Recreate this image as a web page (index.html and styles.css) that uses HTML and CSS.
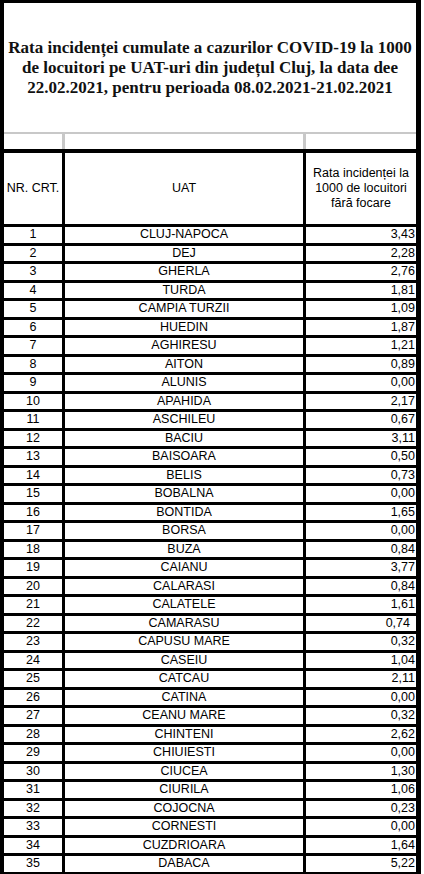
FILE: index.html
```html
<!DOCTYPE html>
<html lang="ro">
<head>
<meta charset="utf-8">
<title>Rata incidenței cumulate COVID-19 Cluj</title>
<link rel="stylesheet" href="styles.css">
</head>
<body>
<div class="sheet">
  <div class="title">
    <p>Rata incidenței cumulate a cazurilor COVID-19 la 1000<br>de locuitori pe UAT-uri din județul Cluj, la data dee<br>22.02.2021, pentru perioada 08.02.2021-21.02.2021</p>
  </div>
  <div class="blank">
    <div></div><div></div><div></div>
  </div>
  <div class="table">
    <div class="th">NR. CRT.</div>
    <div class="th">UAT</div>
    <div class="th">Rata incidenței la<br>1000 de locuitori<br>fără focare</div>

    <div class="c">1</div><div class="c">CLUJ-NAPOCA</div><div class="n">3,43</div>
    <div class="c">2</div><div class="c">DEJ</div><div class="n">2,28</div>
    <div class="c">3</div><div class="c">GHERLA</div><div class="n">2,76</div>
    <div class="c">4</div><div class="c">TURDA</div><div class="n">1,81</div>
    <div class="c">5</div><div class="c">CAMPIA TURZII</div><div class="n">1,09</div>
    <div class="c">6</div><div class="c">HUEDIN</div><div class="n">1,87</div>
    <div class="c">7</div><div class="c">AGHIRESU</div><div class="n">1,21</div>
    <div class="c">8</div><div class="c">AITON</div><div class="n">0,89</div>
    <div class="c">9</div><div class="c">ALUNIS</div><div class="n">0,00</div>
    <div class="c">10</div><div class="c">APAHIDA</div><div class="n">2,17</div>
    <div class="c">11</div><div class="c">ASCHILEU</div><div class="n">0,67</div>
    <div class="c">12</div><div class="c">BACIU</div><div class="n">3,11</div>
    <div class="c">13</div><div class="c">BAISOARA</div><div class="n">0,50</div>
    <div class="c">14</div><div class="c">BELIS</div><div class="n">0,73</div>
    <div class="c">15</div><div class="c">BOBALNA</div><div class="n">0,00</div>
    <div class="c">16</div><div class="c">BONTIDA</div><div class="n">1,65</div>
    <div class="c">17</div><div class="c">BORSA</div><div class="n">0,00</div>
    <div class="c">18</div><div class="c">BUZA</div><div class="n">0,84</div>
    <div class="c">19</div><div class="c">CAIANU</div><div class="n">3,77</div>
    <div class="c">20</div><div class="c">CALARASI</div><div class="n">0,84</div>
    <div class="c">21</div><div class="c">CALATELE</div><div class="n">1,61</div>
    <div class="c">22</div><div class="c">CAMARASU</div><div class="n shift">0,74</div>
    <div class="c">23</div><div class="c">CAPUSU MARE</div><div class="n">0,32</div>
    <div class="c">24</div><div class="c">CASEIU</div><div class="n">1,04</div>
    <div class="c">25</div><div class="c">CATCAU</div><div class="n">2,11</div>
    <div class="c">26</div><div class="c">CATINA</div><div class="n">0,00</div>
    <div class="c">27</div><div class="c">CEANU MARE</div><div class="n">0,32</div>
    <div class="c">28</div><div class="c">CHINTENI</div><div class="n">2,62</div>
    <div class="c">29</div><div class="c">CHIUIESTI</div><div class="n">0,00</div>
    <div class="c">30</div><div class="c">CIUCEA</div><div class="n">1,30</div>
    <div class="c">31</div><div class="c">CIURILA</div><div class="n">1,06</div>
    <div class="c">32</div><div class="c">COJOCNA</div><div class="n">0,23</div>
    <div class="c">33</div><div class="c">CORNESTI</div><div class="n">0,00</div>
    <div class="c">34</div><div class="c">CUZDRIOARA</div><div class="n">1,64</div>
    <div class="c">35</div><div class="c">DABACA</div><div class="n">5,22</div>
  </div>
</div>
</body>
</html>
```

FILE: styles.css
```css
html, body {
  margin: 0;
  padding: 0;
  background: #ffffff;
}

.sheet {
  width: 412px;
  border-top: 3px solid #000;
  border-left: 4px solid #000;
  border-right: 5px solid #000;
  background: #ffffff;
}

.title {
  height: 129px;
  display: flex;
  align-items: center;
  justify-content: center;
  border-bottom: 2px solid #c8c8c8;
}

.title p {
  margin: 0;
  text-align: center;
  font-family: "Liberation Serif", "Times New Roman", serif;
  font-weight: bold;
  font-size: 17px;
  line-height: 20px;
  color: #111;
}

.blank {
  display: grid;
  grid-template-columns: 58px 238px 110px;
  column-gap: 3px;
  height: 15px;
  background: #c8c8c8;
}

.blank div {
  background: #fff;
}

.table {
  display: grid;
  grid-template-columns: 58px 238px 110px;
  grid-template-rows: 71px;
  grid-auto-rows: 15.5px;
  gap: 3px;
  background: #000;
  padding: 4px 0 3px 0;
  font-family: "Liberation Sans", Arial, sans-serif;
  font-size: 12.5px;
  color: #000;
}

.table > div {
  background: #fff;
  display: flex;
  align-items: center;
  white-space: nowrap;
  overflow: hidden;
}

.th {
  justify-content: center;
  text-align: center;
  line-height: 15px;
}

.c {
  justify-content: center;
  line-height: 15px;
}

.n {
  justify-content: flex-end;
  padding-right: 1px;
  line-height: 15px;
}

.n.shift {
  padding-right: 6px;
}
```
